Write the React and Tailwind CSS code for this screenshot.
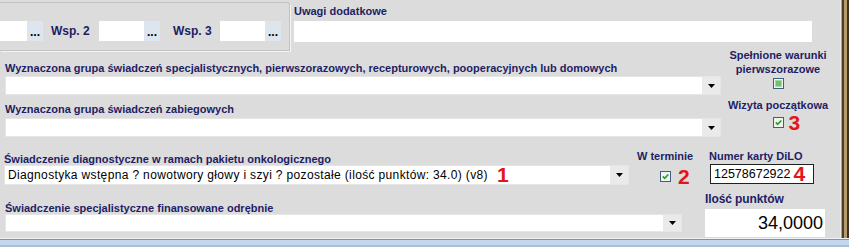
import React from "react";

function L({ className = "", children }) {
  return (
    <div className={`text-[11px] font-bold text-[#1e1e64] whitespace-nowrap ${className}`}>
      {children}
    </div>
  );
}

function Arrow() {
  return (
    <svg width="7" height="4" viewBox="0 0 7 4">
      <path d="M0 0H7L3.5 4Z" fill="#000" />
    </svg>
  );
}

function Combo({ className = "", children }) {
  return (
    <div className={`flex bg-white border border-[#e6e6e6] ${className}`}>
      <div className="flex-1 min-w-0 flex items-center pl-[2px] whitespace-nowrap">
        {children}
      </div>
      <div className="w-[18px] bg-[#eaeaea] flex items-center justify-center">
        <Arrow />
      </div>
    </div>
  );
}

function DotsInput({ className = "" }) {
  return (
    <div className={`flex bg-white h-[20px] ${className}`}>
      <div className="flex-1" />
      <div className="w-[16px] bg-[#dde5ee] flex items-end justify-center pb-[3px] text-[12px] font-bold leading-none text-black">
        ...
      </div>
    </div>
  );
}

function Check({ checked, filled }) {
  return (
    <div className="w-[11px] h-[11px] border border-[#3f5f80] bg-[#f2f2f2] flex items-center justify-center">
      {filled && <div className="w-[7px] h-[7px] bg-[#6cc26c] border border-[#a4d8a4]" />}
      {checked && (
        <svg width="7" height="7" viewBox="0 0 7 7">
          <path d="M0.8 3.4 L2.7 5.3 L6.3 1.5" stroke="#1ea51e" strokeWidth="1.7" fill="none" />
        </svg>
      )}
    </div>
  );
}

function Red({ className = "", children }) {
  return (
    <span className={`text-[21px] font-bold text-[#e4141b] ${className}`}>{children}</span>
  );
}

export default function App() {
  return (
    <div className="w-[849px] h-[247px] overflow-hidden flex flex-col bg-[#dcdcdc] font-['Liberation_Sans',Arial,sans-serif]">
      <div className="flex h-[238px]">
        <div className="w-[840px] flex flex-col">
          {/* Row A */}
          <div className="flex h-[51px]">
            <div className="w-[290px] mt-[2px] h-[49px] border-t border-r border-b border-[#c2c2c2] rounded-tr-[3px] shadow-[1px_1px_0_#f4f4f4] flex items-start pt-[18px]">
              <DotsInput className="w-[43px]" />
              <div className="w-[56px] pl-[8px] text-[12px] font-bold leading-[20px] text-[#1e1e64] whitespace-nowrap">
                Wsp. 2
              </div>
              <DotsInput className="w-[61px]" />
              <div className="w-[60px] pl-[13px] text-[12px] font-bold leading-[20px] text-[#1e1e64] whitespace-nowrap">
                Wsp. 3
              </div>
              <DotsInput className="w-[61px]" />
            </div>
            <div className="ml-[4px] pt-[5px] flex flex-col">
              <L className="leading-[13px]">Uwagi dodatkowe</L>
              <div className="mt-[3px] w-[518px] h-[21px] bg-white" />
            </div>
          </div>

          {/* Rows B / C */}
          <div className="flex h-[86px]">
            <div className="w-[721px] pl-[5px] pt-[11px] flex flex-col">
              <L className="leading-[13px]">
                Wyznaczona grupa świadczeń specjalistycznych, pierwszorazowych, recepturowych, pooperacyjnych lub domowych
              </L>
              <Combo className="mt-[1px] h-[19px]" />
              <L className="mt-[8px] leading-[13px]">Wyznaczona grupa świadczeń zabiegowych</L>
              <Combo className="mt-[2px] h-[19px]" />
            </div>
            <div className="w-[112px] ml-[1px] -mt-[3px] flex flex-col items-center">
              <L className="leading-[14px]">Spełnione warunki</L>
              <L className="leading-[14px]">pierwszorazowe</L>
              <div className="mt-[2px]">
                <Check filled />
              </div>
              <L className="mt-[9px] leading-[14px]">Wizyta początkowa</L>
              <div className="mt-[5px] relative">
                <Check checked />
                <Red className="absolute left-[16px] top-[-5px] leading-[21px]">3</Red>
              </div>
            </div>
          </div>

          {/* Rows D / E */}
          <div className="flex h-[101px] pt-[13px]">
            <div className="w-[705px] flex flex-col">
              <div className="flex items-start">
                <div className="ml-[4px] w-[625px] pt-[4px] flex flex-col">
                  <L className="leading-[11px]">
                    Świadczenie diagnostyczne w ramach pakietu onkologicznego
                  </L>
                  <Combo className="h-[20px]">
                    <span className="text-[12px] tracking-[0.35px] leading-[16px] text-black pl-[1px]">
                      Diagnostyka wstępna ? nowotwory głowy i szyi ? pozostałe (ilość punktów: 34.0) (v8)
                    </span>
                    <Red className="ml-[9px] leading-[16px]">1</Red>
                  </Combo>
                </div>
                <div className="ml-[8px] w-[60px] flex flex-col">
                  <L className="leading-[13px]">W terminie</L>
                  <div className="mt-[6px] h-[15px] flex items-center pl-[23px]">
                    <Check checked />
                    <Red className="ml-[7px] leading-[15px]">2</Red>
                  </div>
                </div>
              </div>
              <div className="ml-[5px] w-[677px] mt-[18px] flex flex-col">
                <L className="leading-[11px]">
                  Świadczenie specjalistyczne finansowane odrębnie
                </L>
                <Combo className="h-[18px]" />
              </div>
            </div>
            <div className="w-[121px] flex flex-col">
              <L className="pl-[4px] leading-[13px]">Numer karty DiLO</L>
              <div className="ml-[5px] mt-[1px] w-[104px] h-[20px] border border-[#202020] bg-white flex items-center pl-[3px] whitespace-nowrap">
                <span className="text-[12.5px] text-black">12578672922</span>
                <Red className="ml-[3px] leading-[16px]">4</Red>
              </div>
              <div className="mt-[8px] text-[12px] tracking-[-0.1px] font-bold leading-[15px] text-[#1e1e64] whitespace-nowrap">
                Ilość punktów
              </div>
              <div className="mt-[2px] w-[120px] h-[28px] bg-white flex items-center justify-end pr-[2px] text-[18px] text-black">
                34,0000
              </div>
            </div>
          </div>
        </div>
        {/* right window frame */}
        <div className="w-[9px] flex">
          <div className="w-[1px] bg-[#e9e9e9]" />
          <div className="w-[1px] bg-[#a3a3a3]" />
          <div className="w-[2px] bg-[#4d3e29]" />
          <div className="w-[3px] bg-[#b59a6a]" />
          <div className="w-[2px] bg-[#3d3122]" />
        </div>
      </div>
      {/* bottom frame */}
      <div className="h-[9px] flex flex-col">
        <div className="h-[1px] bg-[#eef2f6]" />
        <div className="h-[1px] bg-[#7f93ad]" />
        <div className="h-[5px] bg-[#c3d6ec]" />
        <div className="h-[2px] bg-[#a9bfd7]" />
      </div>
    </div>
  );
}
